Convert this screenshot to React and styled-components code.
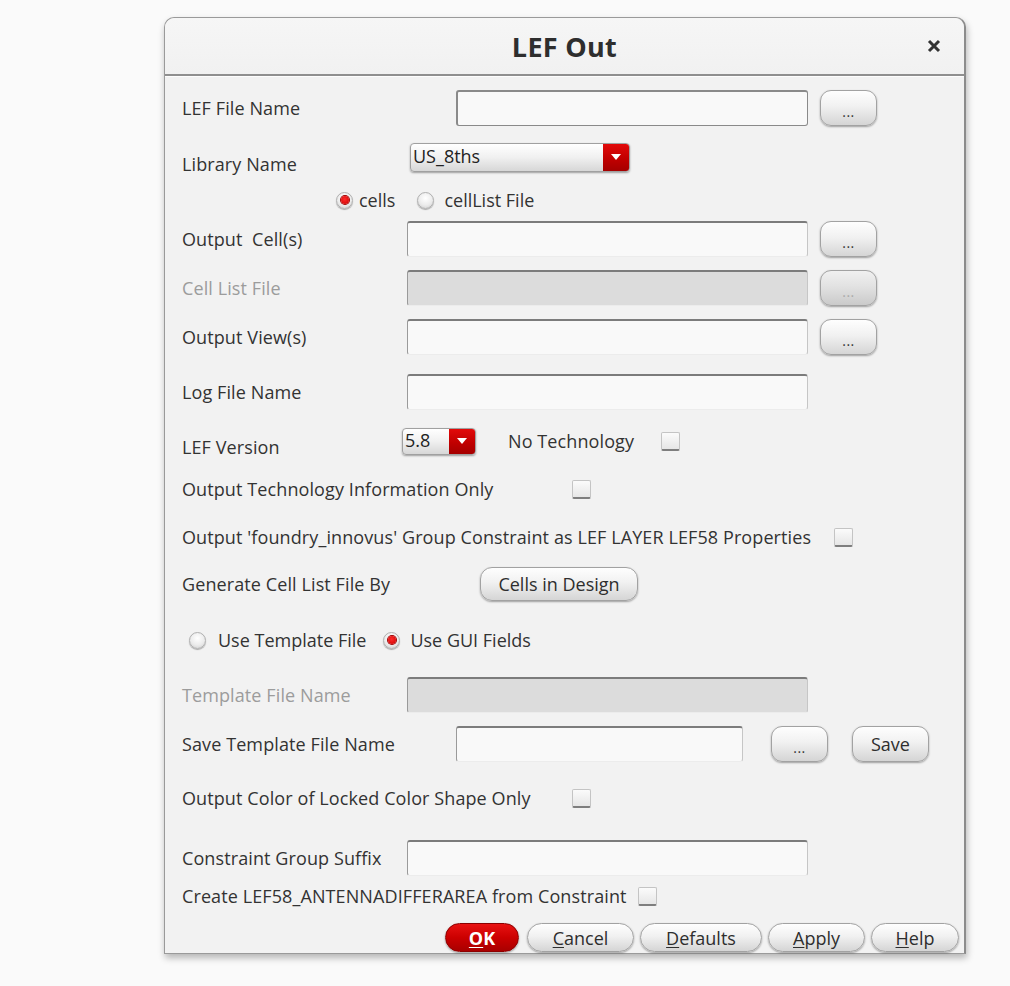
import React from 'react'
import styled, { createGlobalStyle, css } from 'styled-components'

const GlobalStyle = createGlobalStyle`
  html, body {
    margin: 0;
    padding: 0;
    background: #fafafa;
    font-family: "Open Sans", "DejaVu Sans", sans-serif;
    color: #333;
  }
`

const Page = styled.div`
  width: 1010px;
  height: 986px;
  padding: 17px 0 0 164px;
  box-sizing: border-box;
`

const Dialog = styled.div`
  width: 802px;
  background: #f2f2f2;
  border: 1px solid #9a9a9a;
  border-right: 2px solid #8c8c8c;
  border-radius: 10px 10px 0 0;
  box-shadow: 1px 4px 7px rgba(0, 0, 0, 0.28);
  box-sizing: border-box;
`

const TitleBar = styled.div`
  height: 56px;
  display: flex;
  align-items: center;
  justify-content: center;
  position: relative;
  background: linear-gradient(#f6f6f6, #f1f1f1);
  border-radius: 10px 10px 0 0;
  border-bottom: 2px solid #8f8f8f;
  box-shadow: 0 1px 0 #fdfdfd;
`

const Title = styled.h1`
  margin: 0;
  font-size: 27px;
  font-weight: 700;
  color: #2e2e2e;
  letter-spacing: 0.3px;
`

const Close = styled.button`
  position: absolute;
  right: 21px;
  top: 21px;
  width: 16px;
  height: 16px;
  padding: 0;
  border: none;
  background: none;
  display: flex;
`

const Body = styled.div`
  padding: 0 4px 0 17px;
  display: flex;
  flex-direction: column;
`

const Row = styled.div`
  display: flex;
  align-items: center;
  height: ${p => p.$h || 40}px;
  margin-top: ${p => p.$mt || 0}px;
  padding-left: ${p => p.$pl || 0}px;
`

const Label = styled.span`
  font-size: 18px;
  letter-spacing: 0.1px;
  flex: none;
  width: ${p => (p.$w ? `${p.$w}px` : 'auto')};
  padding-top: ${p => p.$drop || 0}px;
  margin-left: ${p => p.$ml || 0}px;
  color: ${p => (p.$disabled ? '#9c9c9c' : '#333')};
  white-space: nowrap;
`

const Field = styled.div`
  flex: none;
  width: ${p => p.$w}px;
  height: 36px;
  box-sizing: border-box;
  border-radius: 3px;
  background: ${p => (p.$disabled ? '#dcdcdc' : '#f9f9f9')};
  border: 1px solid #c6c6c6;
  border-top: 2px solid #7c7c7c;
  border-left: 1px solid #9a9a9a;
  border-bottom-color: #ececec;
  ${p => p.$focus && css`
    border: 2px solid #8a8a8a;
    border-bottom-width: 1px;
    border-right-width: 1px;
  `}
`

const raised = css`
  background: linear-gradient(#fefefe 0%, #f1f1f1 45%, #d5d5d5 100%);
  border: 1px solid #a2a2a2;
  box-shadow: 0 1px 2px rgba(0, 0, 0, 0.35);
  box-sizing: border-box;
  font-family: "Open Sans", "DejaVu Sans", sans-serif;
  color: #333;
  padding: 0;
  display: flex;
  align-items: center;
  justify-content: center;
`

const DotsButton = styled.button`
  ${raised}
  flex: none;
  width: 57px;
  height: 36px;
  margin-left: ${p => p.$ml || 12}px;
  border-radius: 11px;
  font-size: 14px;
  padding-top: 7px;
  letter-spacing: 0.5px;
  color: ${p => (p.$disabled ? '#aaa' : '#333')};
  ${p => p.$disabled && css`
    background: linear-gradient(#f0f0f0 0%, #e2e2e2 45%, #cacaca 100%);
  `}
`

const TextButton = styled.button`
  ${raised}
  flex: none;
  width: ${p => p.$w}px;
  height: ${p => p.$h || 34}px;
  margin-left: ${p => p.$ml || 0}px;
  border-radius: ${p => p.$r || 11}px;
  font-size: 18px;
  color: #2e2e2e;
`

const Select = styled.div`
  flex: none;
  display: flex;
  width: ${p => p.$w}px;
  height: ${p => p.$h}px;
  box-sizing: border-box;
  border: 1px solid #a0a0a0;
  border-radius: 4px;
  background: linear-gradient(#ffffff 0%, #f0f0f0 50%, #d7d7d7 100%);
  box-shadow: 0 1px 2px rgba(0, 0, 0, 0.35);
  overflow: hidden;
`

const SelectText = styled.span`
  flex: 1;
  font-size: 18px;
  padding-left: 2px;
  line-height: ${p => p.$h - 4}px;
  color: #222;
`

const SelectArrow = styled.span`
  flex: none;
  width: 26px;
  display: flex;
  align-items: center;
  justify-content: center;
  background: linear-gradient(#e20a0a 0%, #c10000 55%, #a50000 100%);
`

const RadioCircle = styled.span`
  flex: none;
  width: 17px;
  height: 17px;
  border-radius: 50%;
  box-sizing: border-box;
  border: 1px solid #b0b0b0;
  background: radial-gradient(circle at 50% 35%, #ffffff 0%, #ececec 55%, #cdcdcd 100%);
  box-shadow: 0 1px 1px rgba(0, 0, 0, 0.3);
  display: flex;
  align-items: center;
  justify-content: center;
  &::after {
    content: '';
    display: ${p => (p.$on ? 'block' : 'none')};
    width: 8px;
    height: 8px;
    border-radius: 50%;
    background: radial-gradient(circle at 45% 40%, #ff2a2a, #cc0000);
    box-shadow: 0 0 0 1px #a00000;
  }
`

const RadioLabel = styled.span`
  font-size: 18px;
  margin-left: ${p => p.$gap || 4}px;
  margin-right: ${p => p.$after || 0}px;
  white-space: nowrap;
`

const Check = styled.span`
  flex: none;
  width: 19px;
  height: 19px;
  box-sizing: border-box;
  margin-left: ${p => p.$ml || 0}px;
  border-radius: 2px;
  border: 1px solid #c4c4c4;
  border-bottom: 2px solid #7e7e7e;
  background: linear-gradient(#fbfbfb, #e6e6e6);
`

const Footer = styled.div`
  display: flex;
  justify-content: flex-end;
  align-items: center;
  gap: 6px;
  height: 31px;
  margin-top: 14px;
  padding-right: 1px;
`

const PillButton = styled.button`
  ${raised}
  width: ${p => p.$w}px;
  height: 29px;
  margin-right: ${p => p.$mr || 0}px;
  border-radius: 15px;
  font-size: 18px;
  color: #2e2e2e;
  ${p => p.$primary && css`
    background: linear-gradient(#e81212 0%, #cc0000 50%, #a80000 100%);
    border-color: #8c0000;
    color: #fff;
    font-weight: 700;
  `}
  u {
    text-decoration-thickness: 1px;
    text-underline-offset: 2px;
  }
`

const Arrow = () => (
  <svg width="10" height="6" viewBox="0 0 10 6">
    <path d="M0 0 H10 L5 6 Z" fill="#fff" />
  </svg>
)

const Dropdown = ({ w, h, value }) => (
  <Select $w={w} $h={h}>
    <SelectText $h={h}>{value}</SelectText>
    <SelectArrow>
      <Arrow />
    </SelectArrow>
  </Select>
)

const Radio = ({ on, children, gap, after }) => (
  <>
    <RadioCircle $on={on} />
    <RadioLabel $gap={gap} $after={after}>{children}</RadioLabel>
  </>
)

const App = () => (
  <Page>
    <GlobalStyle />
    <Dialog>
      <TitleBar>
        <Title>LEF Out</Title>
        <Close aria-label="close">
          <svg width="14" height="14" viewBox="0 0 14 14">
            <path d="M2 2 L12 12 M12 2 L2 12" stroke="#333" strokeWidth="3" strokeLinecap="butt" />
          </svg>
        </Close>
      </TitleBar>
      <Body>
        <Row $mt={12}>
          <Label $w={274}>LEF File Name</Label>
          <Field $w={352} $focus />
          <DotsButton>...</DotsButton>
        </Row>

        <Row $mt={13} $h={32}>
          <Label $w={228} $drop={14}>Library Name</Label>
          <Dropdown w={220} h={29} value="US_8ths" />
        </Row>

        <Row $mt={15} $h={24} $pl={154}>
          <Radio on gap={6} after={22}>cells</Radio>
          <Radio gap={10}>cellList File</Radio>
        </Row>

        <Row $mt={7}>
          <Label $w={225}>Output&nbsp; Cell(s)</Label>
          <Field $w={401} />
          <DotsButton>...</DotsButton>
        </Row>

        <Row $mt={9}>
          <Label $w={225} $disabled>Cell List File</Label>
          <Field $w={401} $disabled />
          <DotsButton $disabled>...</DotsButton>
        </Row>

        <Row $mt={9}>
          <Label $w={225}>Output View(s)</Label>
          <Field $w={401} />
          <DotsButton>...</DotsButton>
        </Row>

        <Row $mt={15}>
          <Label $w={225}>Log File Name</Label>
          <Field $w={401} />
        </Row>

        <Row $mt={13} $h={32}>
          <Label $w={220} $drop={12}>LEF Version</Label>
          <Dropdown w={74} h={27} value="5.8" />
          <Label $ml={32}>No Technology</Label>
          <Check $ml={27} />
        </Row>

        <Row $mt={20} $h={24}>
          <Label $w={390}>Output Technology Information Only</Label>
          <Check />
        </Row>

        <Row $mt={24} $h={24}>
          <Label $w={652}>Output 'foundry_innovus' Group Constraint as LEF LAYER LEF58 Properties</Label>
          <Check />
        </Row>

        <Row $mt={17} $h={36}>
          <Label $w={298}>Generate Cell List File By</Label>
          <TextButton $w={158} $h={34} $r={12}>Cells in Design</TextButton>
        </Row>

        <Row $mt={26} $h={24} $pl={7}>
          <Radio gap={12} after={17}>Use Template File</Radio>
          <Radio on gap={10}>Use GUI Fields</Radio>
        </Row>

        <Row $mt={23}>
          <Label $w={225} $disabled>Template File Name</Label>
          <Field $w={401} $disabled />
        </Row>

        <Row $mt={9}>
          <Label $w={274}>Save Template File Name</Label>
          <Field $w={287} />
          <DotsButton $ml={28}>...</DotsButton>
          <TextButton $w={77} $h={36} $ml={24}>Save</TextButton>
        </Row>

        <Row $mt={22} $h={24}>
          <Label $w={390}>Output Color of Locked Color Shape Only</Label>
          <Check />
        </Row>

        <Row $mt={28}>
          <Label $w={225}>Constraint Group Suffix</Label>
          <Field $w={401} />
        </Row>

        <Row $mt={6} $h={24}>
          <Label $w={456}>Create LEF58_ANTENNADIFFERAREA from Constraint</Label>
          <Check />
        </Row>

        <Footer>
          <PillButton $primary $w={74} $mr={2}><u>O</u>K</PillButton>
          <PillButton $w={107}><u>C</u>ancel</PillButton>
          <PillButton $w={122}><u>D</u>efaults</PillButton>
          <PillButton $w={97}><u>A</u>pply</PillButton>
          <PillButton $w={88}><u>H</u>elp</PillButton>
        </Footer>
      </Body>
    </Dialog>
  </Page>
)

export default App
